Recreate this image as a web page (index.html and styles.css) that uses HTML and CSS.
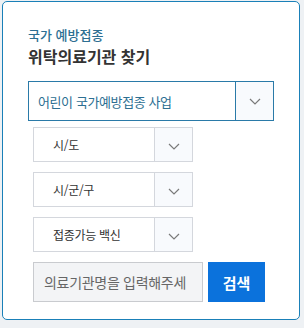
FILE: index.html
```html
<!DOCTYPE html>
<html lang="ko">
<head>
<meta charset="utf-8">
<link rel="stylesheet" href="styles.css">
</head>
<body>
<div class="card">
  <p class="eyebrow">국가 예방접종</p>
  <h1 class="title">위탁의료기관 찾기</h1>
  <div class="select main">
    <span class="label">어린이 국가예방접종 사업</span>
    <span class="arrow"><svg width="12" height="7" viewBox="0 0 12 7"><path d="M1 1l5 5 5-5" fill="none" stroke="#7a7a7a" stroke-width="1.2"/></svg></span>
  </div>
  <div class="subs">
    <div class="select sub">
      <span class="label">시/도</span>
      <span class="arrow"><svg width="12" height="7" viewBox="0 0 12 7"><path d="M1 1l5 5 5-5" fill="none" stroke="#7a7a7a" stroke-width="1.2"/></svg></span>
    </div>
    <div class="select sub">
      <span class="label">시/군/구</span>
      <span class="arrow"><svg width="12" height="7" viewBox="0 0 12 7"><path d="M1 1l5 5 5-5" fill="none" stroke="#7a7a7a" stroke-width="1.2"/></svg></span>
    </div>
    <div class="select sub">
      <span class="label">접종가능 백신</span>
      <span class="arrow"><svg width="12" height="7" viewBox="0 0 12 7"><path d="M1 1l5 5 5-5" fill="none" stroke="#7a7a7a" stroke-width="1.2"/></svg></span>
    </div>
    <div class="search">
      <div class="input">의료기관명을 입력해주세</div>
      <button class="btn">검색</button>
    </div>
  </div>
</div>
</body>
</html>
```
FILE: styles.css
```css
html, body {
  margin: 0;
  padding: 0;
}
body {
  background: #eef1f4;
  width: 304px;
  height: 328px;
  font-family: "Noto Sans CJK KR", "Noto Sans", sans-serif;
  color: #333;
}
.card {
  box-sizing: border-box;
  margin: 1px 0 0 2px;
  width: 298px;
  height: 319px;
  background: #fff;
  border: 1px solid #1a80b8;
  border-radius: 5px;
  padding: 24px 25px 0 25px;
}
.eyebrow {
  margin: 0;
  font-size: 13px;
  line-height: 18px;
  font-weight: 500;
  color: #2d6f92;
}
.title {
  margin: 1px 0 0 0;
  font-size: 16px;
  line-height: 22px;
  font-weight: 700;
  color: #333;
}
.select {
  box-sizing: border-box;
  display: flex;
  align-items: stretch;
  background: #fff;
}
.select .label {
  flex: 1;
  display: flex;
  align-items: center;
}
.select .arrow {
  display: flex;
  align-items: center;
  justify-content: center;
  background: #f8fafd;
}
.main {
  margin-top: 14px;
  width: 246px;
  height: 40px;
  border: 1px solid #2a7aa8;
}
.main .label {
  padding-left: 9px;
  font-size: 13px;
  color: #2d6f92;
  letter-spacing: -0.4px;
}
.main .arrow {
  width: 37px;
  border-left: 1px solid #2a7aa8;
}
.subs {
  margin: 6px 0 0 5px;
  display: flex;
  flex-direction: column;
  gap: 10px;
}
.sub {
  width: 160px;
  height: 35px;
  border: 1px solid #d4d7dd;
}
.sub .label {
  padding-left: 19px;
  font-size: 12px;
  color: #333;
  letter-spacing: -0.3px;
}
.sub .arrow {
  width: 38px;
  border-left: 1px solid #d4d7dd;
  padding-top: 3px;
  box-sizing: border-box;
}
.search {
  display: flex;
  gap: 5px;
}
.input {
  box-sizing: border-box;
  width: 170px;
  height: 40px;
  background: #f3f4f6;
  border: 1px solid #c9cbcf;
  padding-left: 10px;
  display: flex;
  align-items: center;
  font-size: 14px;
  color: #666;
  letter-spacing: -0.3px;
  white-space: nowrap;
  overflow: hidden;
}
.btn {
  width: 57px;
  height: 40px;
  border: 0;
  margin: 0;
  padding: 0;
  background: #0b72dc;
  color: #fff;
  font-family: inherit;
  font-size: 15px;
  font-weight: 700;
}
```
